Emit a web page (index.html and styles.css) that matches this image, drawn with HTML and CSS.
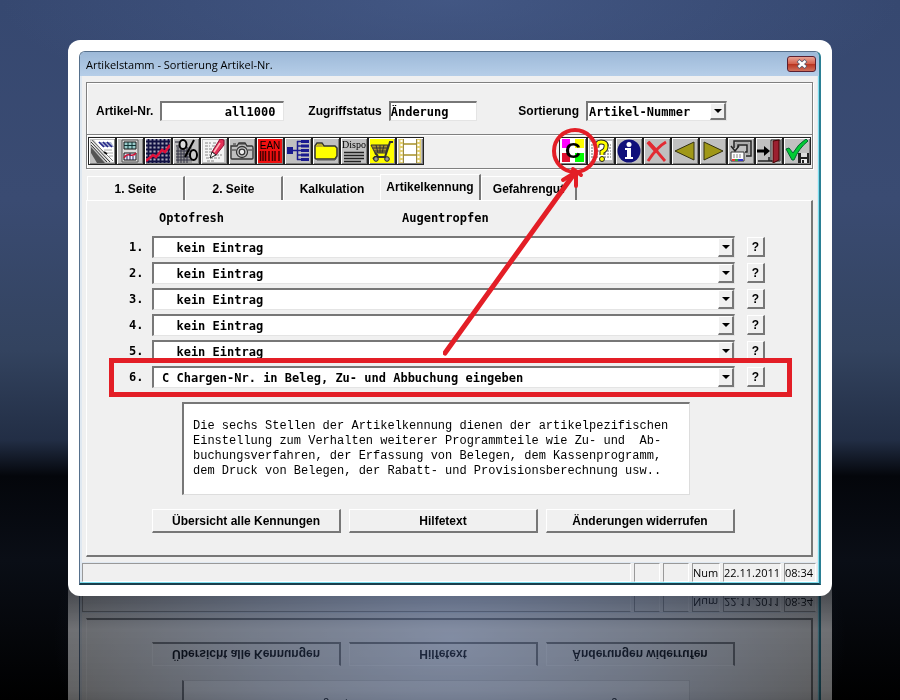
FILE: index.html
```html
<!DOCTYPE html>
<html lang="de">
<head>
  <meta charset="UTF-8" />
  <meta name="viewport" content="width=device-width,initial-scale=1.0"/>
  <title>Artikelstamm - Sortierung Artikel-Nr.</title>
  <link rel="stylesheet" href="styles.css">
</head>
<body>
  <div class="card">
    <main class="window">
      <!-- Title bar -->
      <header class="titlebar">
        <h1>Artikelstamm - Sortierung Artikel-Nr.</h1>
        <button class="close" aria-label="Schließen">
          <svg width="12" height="10" viewBox="0 0 12 10"><path d="M2 1.500L10 8.500M10 1.500L2 8.500" stroke="#555a70" stroke-width="4"/><path d="M2.500 2L9.500 8M9.500 2L2.500 8" stroke="#fff" stroke-width="2.400"/></svg>
        </button>
      </header>

      <div class="content">
        <!-- Head: article, status, sorting, toolbar -->
        <section class="head">
          <div class="fields">
            <label for="artikel">Artikel-Nr.</label>
            <input class="artikel" id="artikel" type="text" value="all1000" />
            <label for="status">Zugriffstatus</label>
            <input class="status" id="status" type="text" value="Änderung" />
            <label for="sort">Sortierung</label>
            <div class="combo sort">
              <select id="sort"><option>Artikel-Nummer</option></select>
              <span class="arrow"></span>
            </div>
          </div>

          <div class="toolbar">
            <button aria-label="Artikel"><svg viewBox="0 0 24 24"><path d="M4 1H24V23H21Z" fill="#fff"/><path d="M8 3H21L24 8H13Z" fill="#aab4d0"/><path d="M9 3L14 8M13 3L18 8M17 3L22 8" stroke="#228" stroke-width="1.500"/><path d="M14 11H22M17 14H23M19 17H23" stroke="#aaa"/><path d="M1 1L22 23H17L1 6Z" fill="#e8e8e8"/><path d="M1 3L20 23M1 6L17 23" stroke="#333"/><path d="M2 1L23 22" stroke="#777"/><path d="M1 8L15 24H7L1 14Z" fill="#555"/><path d="M14 13L17 15" stroke="#111" stroke-width="2"/></svg></button>
            <button aria-label="Ansicht"><svg viewBox="0 0 24 24"><path d="M4 1H20V23H4Z" fill="#ddd" stroke="#555"/><path d="M6 3H18V10H6Z" fill="#9cc" stroke="#111"/><path d="M6 6.500H18M10 3V10M14 3V10" stroke="#133"/><path d="M6 14H18V21H6Z" fill="#eef" stroke="#111"/><path d="M6 19Q8 15 12 16T18 14" stroke="#c13" fill="none" stroke-width="1.500"/><path d="M9 17V21M12 14V21M15 17V21" stroke="#225"/></svg></button>
            <button aria-label="Statistik"><svg viewBox="0 0 24 24"><path d="M0 0H24V24H0Z" fill="#aab"/><path d="M2.500 0V24M6.500 0V24M10.500 0V24M14.500 0V24M18.500 0V24M22.500 0V24M0 2.500H24M0 6.500H24M0 10.500H24M0 14.500H24M0 18.500H24M0 22.500H24" stroke="#114" stroke-width="1.800"/><path d="M0 22L7 16L10 18L16 11L19 13L24 6" fill="none" stroke="#e0103a" stroke-width="2.500"/></svg></button>
            <button aria-label="Prozent"><svg viewBox="0 0 24 24"><path d="M2 8H18V24H2Z" fill="#999"/><path d="M4 8V24M7 8V24M10 8V24M13 8V24M2 12H18M2 15H18M2 18H18M2 21H18" stroke="#334"/><path d="M1 3H12M2 7H8" stroke="#223"/><ellipse cx="9" cy="5.500" rx="3.500" ry="4.500" fill="#ddd" stroke="#000" stroke-width="2"/><path d="M20 1L11 18" stroke="#000" stroke-width="2"/><ellipse cx="19.500" cy="16" rx="3.500" ry="5" fill="#ccc" stroke="#000" stroke-width="2"/></svg></button>
            <button aria-label="Notiz"><svg viewBox="0 0 24 24"><path d="M1 1H22V23H1Z" fill="#f4f4f4"/><path d="M3 4H9M11 4H15M3 7H8M10 7H14M3 10H12M3 13H10M3 16H8M14 16H20M4 19H18M5 22H12" stroke="#888" stroke-dasharray="3 1"/><path d="M18 0L22 1V6L14 16L10 13Z" fill="#e33057" stroke="#813"/><path d="M18 4L12 13" stroke="#fbb" stroke-width="1.500"/><path d="M10 13L14 16L8 19Z" fill="#fff" stroke="#222"/></svg></button>
            <button aria-label="Bild"><svg viewBox="0 0 24 24"><path d="M1 7H7L9 4H15L17 7H22Q23 7 23 9V19Q23 20 22 20H2Q1 20 1 19V8Z" fill="#c0c0c0" stroke="#333" stroke-width="1.300"/><path d="M9 5H15M2 11H6M18 11H22M3 5H6" stroke="#333"/><circle cx="12" cy="13" r="5.500" fill="#ccc" stroke="#333" stroke-width="1.300"/><circle cx="12" cy="13" r="2.800" fill="#eee" stroke="#333" stroke-width="1.300"/></svg></button>
            <button class="ean"><span>EAN</span><svg viewBox="0 0 24 12"><path d="M2.500 0V10M5 0V10M7.500 0V10M11 0V10M14.500 0V10M17 0V10M21 0V10" stroke="#400" stroke-width="1.500"/></svg></button>
            <button aria-label="Struktur"><svg viewBox="0 0 24 24"><path d="M1 8H7V15H1ZM15 1H23V4H15ZM15 5.500H23V8.500H15ZM15 10H23V13H15ZM15 14.500H23V17.500H15ZM15 19H23V22H15Z" fill="#1a1a90"/><path d="M7 11.500H15M11.500 2V21M11 2.500H15M11 7H15M11 16H15M11 20.500H15" stroke="#1a1a90" stroke-width="1.500"/></svg></button>
            <button aria-label="Ordner"><svg viewBox="0 0 24 24"><path d="M1 19V7L3 4H8L10 7H21L23 9V17L21 20H2Z" fill="#ff0" stroke="#333" stroke-width="1.500"/><path d="M2 7L4 5H8L9 8H2Z" fill="#ba3"/><path d="M3 21H21L23 18" stroke="#555" fill="none"/></svg></button>
            <button class="dispo"><span>Dispo</span><svg viewBox="0 0 24 12"><path d="M2 1.500H22M2 4.500H22M2 7.500H22M2 10.500H19" stroke="#222" stroke-width="1.500"/></svg></button>
            <button class="cart" aria-label="Einkauf"><svg viewBox="0 0 24 24"><path d="M1 6H18L16 14H5Z" fill="#aa9430" stroke="#333"/><path d="M3 9H17M4 12H16M6 6L8 14M10 6V14M14 6L12 14" stroke="#333"/><path d="M23 3H20L15 18H5L3 20M5 14L8 17" fill="none" stroke="#333" stroke-width="2"/><circle cx="6" cy="20" r="2.300" fill="#999" stroke="#222"/><circle cx="17" cy="20" r="2.300" fill="#999" stroke="#222"/></svg></button>
            <button aria-label="Film"><svg viewBox="0 0 24 24"><path d="M1 0H23V24H1Z" fill="#e2cf70"/><path d="M6 0H18V4H6ZM6 6H18V15H6ZM6 17H18V24H6Z" fill="#fff"/><path d="M3.500 1V24M20.500 1V24" stroke="#fff" stroke-width="2" stroke-dasharray="2 2"/><path d="M5.500 0V24M18.500 0V24M6 5H18M6 16H18" stroke="#988844"/></svg></button>

            <button class="charge">
              <svg viewBox="0 0 24 24"><path d="M0 0H24V24H0Z" fill="#fff"/><path d="M1 0H9V9H1Z" fill="#f0f"/><path d="M14 0H23V9H14Z" fill="#ff0"/><path d="M1 14H9V23H1Z" fill="#e01030"/><path d="M14 14H23V23H14Z" fill="#0f0"/></svg>
              <span>C</span>
            </button>
            <button aria-label="Hilfe"><svg viewBox="0 0 24 24"><path d="M1 3H14V2H23V21H10V22H1Z" fill="#fff"/><path d="M2 6H8M2 9H7M15 6H22M17 9H22M2 12H10M15 12H22M2 15H9M15 15H22M2 18H9M15 18H22" stroke="#666" stroke-dasharray="2 1"/><path d="M8 9Q7 3 12 3Q18 3 17 8Q17 11 13 13V16" fill="none" stroke="#222" stroke-width="5"/><path d="M8 9Q7 3 12 3Q18 3 17 8Q17 11 13 13V16" fill="none" stroke="#ff0" stroke-width="3"/><circle cx="13" cy="20" r="2.500" fill="#ff0" stroke="#222"/></svg></button>
            <button aria-label="Info"><svg viewBox="0 0 24 24"><circle cx="12" cy="12" r="11.500" fill="#10107a"/><circle cx="12" cy="5.500" r="2.500" fill="#fff"/><path d="M8 9H14V18H16V20H8V18H10V11H8Z" fill="#fff"/></svg></button>
            <button aria-label="Löschen"><svg viewBox="0 0 24 24"><path d="M3 3L9 9L20 22M21 3Q12 8 3 22" fill="none" stroke="#e22a32" stroke-width="2.800"/><path d="M3 3L12 13" stroke="#e22a32" stroke-width="4"/></svg></button>
            <button aria-label="Zurück"><svg viewBox="0 0 24 24"><path d="M2 12L21 3V21Z" fill="#a09818" stroke="#333010"/></svg></button>
            <button aria-label="Weiter"><svg viewBox="0 0 24 24"><path d="M22 12L3 3V21Z" fill="#a09818" stroke="#333010"/></svg></button>
            <button aria-label="Wechseln"><svg viewBox="0 0 24 24"><path d="M5 9V2H22V17H17M9 8V6H18V13H16" fill="none" stroke="#222" stroke-width="1.500"/><path d="M7 8V4H20V15H17" fill="none" stroke="#999"/><path d="M2 7L6 12L10 7" fill="none" stroke="#222" stroke-width="1.500"/><path d="M2 13H15V22H2Z" fill="#fff" stroke="#333"/><path d="M4 16H13M4 18H13" stroke="#888" stroke-dasharray="2 1"/><path d="M3 21H6" stroke="#e33" stroke-width="2"/><path d="M6 21H9" stroke="#3a3" stroke-width="2"/><path d="M9 21H14" stroke="#33c" stroke-width="2"/></svg></button>
            <button aria-label="Beenden"><svg viewBox="0 0 24 24"><path d="M14 1H23V22H14Z" fill="#ddd" stroke="#222"/><path d="M16 2L22 1V21L16 24Z" fill="#9c2030" stroke="#400"/><path d="M0 12H9" stroke="#000" stroke-width="3"/><path d="M7 7L13 12L7 17Z" fill="#000"/><path d="M1 22H15M12 18V22" stroke="#222" stroke-width="1.500"/></svg></button>
            <button aria-label="Speichern"><svg viewBox="0 0 24 24"><path d="M1 10L4 9L8 14Q13 5 21 0L23 2Q14 9 9 21H7Z" fill="#0c3" stroke="#063"/><path d="M13 14H24V24H13Z" fill="#222"/><path d="M16 14H22V18H16Z" fill="#ddd"/><path d="M16 20H22V24H16Z" fill="#eee"/><path d="M17 21H19V24H17Z" fill="#222"/></svg></button>
          </div>
        </section>

        <!-- Tabs -->
        <nav class="tabs">
          <button>1. Seite</button>
          <button>2. Seite</button>
          <button>Kalkulation</button>
          <button class="active">Artikelkennung</button>
          <button>Gefahrengut</button>
        </nav>

        <section class="panel">
          <div class="names">
            <span>Optofresh</span>
            <span>Augentropfen</span>
          </div>

          <div class="row">
            <label for="k1">1.</label>
            <div class="combo"><select id="k1"><option>&nbsp;&nbsp;kein Eintrag</option></select><span class="arrow"></span></div>
            <button class="help">?</button>
          </div>
          <div class="row">
            <label for="k2">2.</label>
            <div class="combo"><select id="k2"><option>&nbsp;&nbsp;kein Eintrag</option></select><span class="arrow"></span></div>
            <button class="help">?</button>
          </div>
          <div class="row">
            <label for="k3">3.</label>
            <div class="combo"><select id="k3"><option>&nbsp;&nbsp;kein Eintrag</option></select><span class="arrow"></span></div>
            <button class="help">?</button>
          </div>
          <div class="row">
            <label for="k4">4.</label>
            <div class="combo"><select id="k4"><option>&nbsp;&nbsp;kein Eintrag</option></select><span class="arrow"></span></div>
            <button class="help">?</button>
          </div>
          <div class="row">
            <label for="k5">5.</label>
            <div class="combo"><select id="k5"><option>&nbsp;&nbsp;kein Eintrag</option></select><span class="arrow"></span></div>
            <button class="help">?</button>
          </div>
          <div class="row marked">
            <label for="k6">6.</label>
            <div class="combo"><select id="k6"><option>C Chargen-Nr. in Beleg, Zu- und Abbuchung eingeben</option></select><span class="arrow"></span></div>
            <button class="help">?</button>
          </div>

          <textarea class="note" aria-label="Beschreibung" readonly>Die sechs Stellen der Artikelkennung dienen der artikelpezifischen
Einstellung zum Verhalten weiterer Programmteile wie Zu- und  Ab-
buchungsverfahren, der Erfassung von Belegen, dem Kassenprogramm,
dem Druck von Belegen, der Rabatt- und Provisionsberechnung usw..</textarea>

          <div class="actions">
            <button>Übersicht alle Kennungen</button>
            <button>Hilfetext</button>
            <button>Änderungen widerrufen</button>
          </div>
        </section>
      </div>

      <!-- Status bar -->
      <footer class="statusbar">
        <span class="message"></span>
        <span class="slot"></span>
        <span class="slot"></span>
        <span class="num">Num</span>
        <span class="date">22.11.2011</span>
        <span class="time">08:34</span>
      </footer>

      <!-- Red marker from row 6 to the C button -->
      <svg class="marker" width="160" height="230" viewBox="0 0 160 230">
        <ellipse cx="132" cy="24" rx="21" ry="21"/>
        <path class="line" d="M2 226L131 47"/>
        <path d="M120 53L133 45M133 45L133 59M130 42L138 48"/>
      </svg>
    </main>
  </div>
</body>
</html>
```
FILE: styles.css
```css
/* ---------- Global ---------- */
* {
  box-sizing: border-box;
}
body {
  margin: 0;
  min-height: 100vh;
  overflow: hidden;
  padding: 40px 68px 103px;
  background:
    radial-gradient(ellipse 44% 240px at 50% 640px, #34466c, rgba(40, 56, 88, 0.7) 50%, transparent),
    radial-gradient(ellipse 50% 120px at 50% 0, rgba(84, 108, 160, 0.4), transparent),
    linear-gradient(#364870 0, #3a4b72 200px, #33435f 350px, #222e45 440px, #04060b 476px, #0a0e16 560px, #000 700px);
  font-family: "Liberation Sans", Arial, sans-serif;
  font-size: 12px;
  color: #000;
}
button, input, select, textarea {
  font: inherit;
  color: inherit;
  border-radius: 0;
  margin: 0;
  padding: 0;
}
label, .tabs, .actions, .help {
  font-weight: bold;
}

/* ---------- Card and window ---------- */
.card {
  background: #fff;
  border-radius: 12px;
  padding: 11px;
  -webkit-box-reflect: below -17px linear-gradient(transparent 60%, rgba(255, 255, 255, 0.38) 80%, rgba(255, 255, 255, 0.42) 91%, rgba(255, 255, 255, 0.2));
}
.window {
  position: relative;
  background: #dfe8f1;
  border: 1px solid #56708c;
  border-right: 2px solid #2b7f94;
  border-bottom: 2px solid #1b3f4c;
  border-radius: 6px 6px 0 0;
  padding: 0 2px 1px;
  box-shadow: inset -1px -1px #7fe0f0;
}
.titlebar {
  display: flex;
  align-items: center;
  justify-content: space-between;
  height: 24px;
  margin: 0 -2px;
  padding: 0 3px 0 6px;
  border-radius: 5px 5px 0 0;
  background: linear-gradient(#9db9d8, #b6cee8);
}
h1 {
  margin: 0;
  font: 11px "Open Sans", sans-serif;
}
.close {
  display: grid;
  place-items: center;
  width: 29px;
  height: 16px;
  border: 1px solid #5a2030;
  border-radius: 3px;
  background: linear-gradient(#e8a294, #d4604c 48%, #b83420 52%, #d0705c);
}
.content {
  background: #f0f0f0;
  padding: 6px 4px 5px;
}

/* ---------- Head ---------- */
.head {
  border: 1px solid #808080;
  box-shadow: inset 1px 1px #fff, 1px 1px #fff;
}
.fields {
  display: flex;
  align-items: center;
  height: 51px;
  padding: 5px 85px 0 9px;
}
.fields label {
  margin-right: 7px;
}
.fields input, .combo {
  height: 20px;
  background: #fff;
  border: 1px solid #e4e4e4;
  border-top: 2px solid #777;
  border-left: 2px solid #777;
  font: bold 12px "DejaVu Sans Mono", monospace;
}
.fields .artikel {
  width: 124px;
  padding-right: 8px;
  margin-right: 24px;
  text-align: right;
}
.status {
  width: 88px;
}
.fields label[for="sort"] {
  margin-left: auto;
}
.combo {
  display: flex;
  padding: 0;
}
.combo select {
  appearance: none;
  flex: 1;
  min-width: 0;
  border: 0;
  background: none;
  padding: 0 0 0 8px;
}
.sort {
  width: 141px;
}
.sort select {
  padding-left: 1px;
}
.arrow {
  display: grid;
  place-items: center;
  width: 16px;
  background: #f0f0f0;
  border: 1px solid #fff;
  border-right: 2px solid #777;
  border-bottom: 2px solid #777;
  pointer-events: none;
}
.arrow::before {
  content: "";
  border: 4px solid transparent;
  border-top-color: #000;
  border-bottom: 0;
}

/* ---------- Toolbar ---------- */
.toolbar {
  display: flex;
  border-top: 1px solid #808080;
  box-shadow: inset 0 1px #fff;
  padding: 2px 1px 3px;
}
.toolbar button {
  position: relative;
  width: 28px;
  height: 28px;
  background: #c0c0c0;
  border: 1px solid #222;
  box-shadow: inset 1px 1px #fff, inset -1px -1px #808080;
  overflow: hidden;
}
.toolbar svg {
  display: block;
  width: 24px;
  margin: auto;
}
.toolbar .ean {
  background: #f01010;
  font-size: 10px;
  line-height: 11px;
}
.toolbar .cart {
  background: #ff0;
}
.toolbar .dispo {
  font: 10px/12px "Liberation Serif", serif;
}
.toolbar .charge {
  margin-left: auto;
}
.charge span {
  position: absolute;
  inset: 0;
  font: bold 22px/26px "Liberation Sans", sans-serif;
}

/* ---------- Tabs ---------- */
.tabs {
  display: flex;
  align-items: flex-end;
  height: 31px;
  padding-left: 1px;
}
.tabs button {
  width: 98px;
  height: 24px;
  background: none;
  border: 1px solid #fff;
  border-width: 1px 0 0 1px;
  border-right: 2px solid #777;
}
.tabs button:nth-child(3) {
  width: 97px;
  border-right: 0;
}
.tabs .active {
  height: 26px;
  width: 101px;
  padding-bottom: 2px;
}
.tabs button:last-child {
  width: 96px;
}

/* ---------- Panel ---------- */
.panel {
  border: 1px solid #fff;
  border-right: 2px solid #777;
  border-bottom: 2px solid #777;
  padding: 8px 46px 22px 42px;
}
.names {
  display: grid;
  grid-template-columns: 243px 1fr;
  height: 27px;
  padding-left: 30px;
  font: bold 12px/18px "DejaVu Sans Mono", monospace;
}
.row {
  position: relative;
  display: flex;
  align-items: center;
  height: 22px;
  margin-bottom: 4px;
}
.row label {
  width: 23px;
  font: bold 12px "DejaVu Sans Mono", monospace;
}
.row .combo {
  flex: 1;
  height: 22px;
}
.help {
  width: 18px;
  height: 20px;
  margin-left: 12px;
}
.help, .actions button {
  background: #f0f0f0;
  border: 1px solid #fff;
  border-right: 2px solid #777;
  border-bottom: 2px solid #777;
}
.marked::after {
  content: "";
  position: absolute;
  inset: -8px -27px -9px -20px;
  border: 5px solid #e31e26;
  pointer-events: none;
}
.note {
  display: block;
  width: calc(100% - 128px);
  height: 93px;
  margin: 14px 0 14px 53px;
  padding: 15px 9px;
  resize: none;
  overflow: hidden;
  outline: 0;
  background: #fff;
  border: 1px solid #ddd;
  border-top: 2px solid #777;
  border-left: 2px solid #777;
  font: 12px/15px "Liberation Mono", monospace;
  white-space: pre;
}
.actions {
  display: grid;
  grid-template-columns: repeat(3, 1fr);
  gap: 8px;
  margin: 0 30px 0 23px;
}
.actions button {
  height: 24px;
}

/* ---------- Status bar ---------- */
.statusbar {
  display: flex;
  gap: 3px;
  margin-top: 1px;
  padding-right: 1px;
  background: #f0f0f0;
  font: 11px/17px "Open Sans", sans-serif;
}
.statusbar span {
  height: 19px;
  border: 1px solid #fff;
  border-top-color: #999;
  border-left-color: #999;
  white-space: nowrap;
}
.statusbar .message {
  flex: 1;
}
.statusbar .slot {
  width: 26px;
}
.statusbar .num {
  width: 28px;
}
.statusbar .date {
  width: 58px;
}
.statusbar .time {
  width: 32px;
}

/* ---------- Marker ---------- */
.marker {
  position: absolute;
  top: 75px;
  right: 216px;
  fill: none;
  stroke: #e31e26;
  stroke-width: 4;
  stroke-linecap: round;
  pointer-events: none;
}
.marker .line {
  stroke-width: 5;
}
```
